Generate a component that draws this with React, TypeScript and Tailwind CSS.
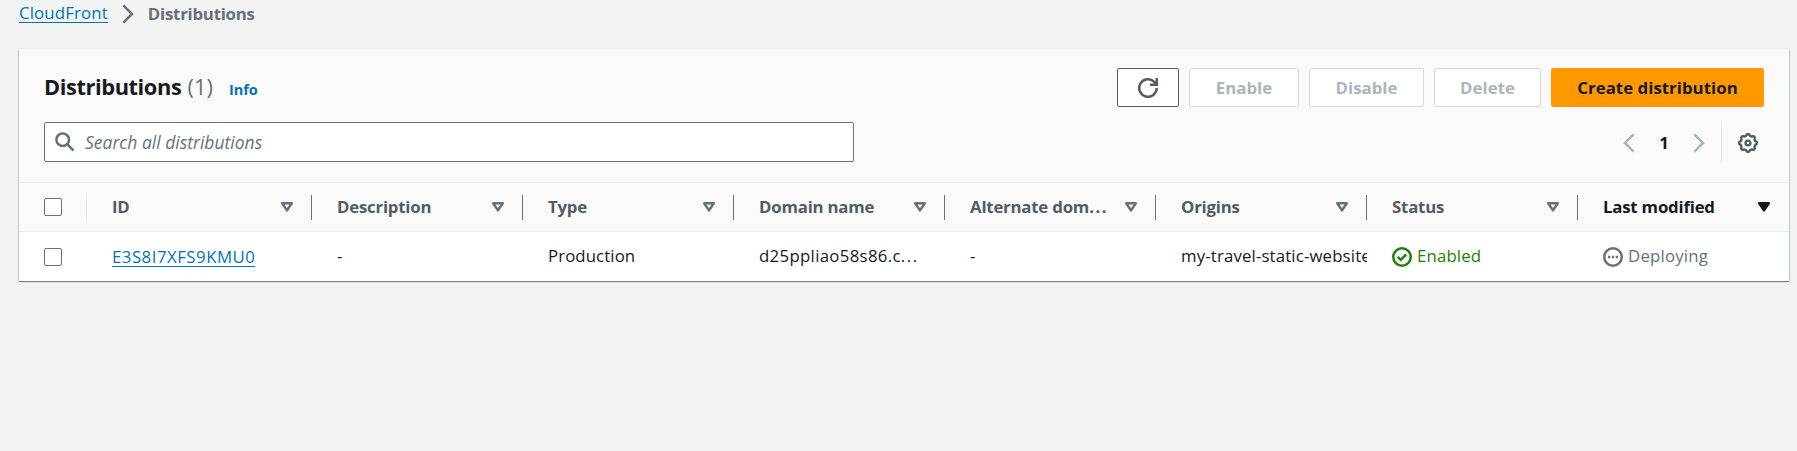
import React from "react";

type Column = { name: string; active?: boolean; dots?: boolean };

const columns: Column[] = [
  { name: "ID" },
  { name: "Description" },
  { name: "Type" },
  { name: "Domain name" },
  { name: "Alternate dom", dots: true },
  { name: "Origins" },
  { name: "Status" },
  { name: "Last modified", active: true },
];

function Chevron({ className, flip }: { className: string; flip?: boolean }) {
  return (
    <svg viewBox="0 0 20 20" className={`h-5 w-5 shrink-0 ${className}`} fill="none" stroke="currentColor" strokeWidth="2.5">
      <path d={flip ? "M14.600 1.400 6 10l8.600 8.600" : "M5.400 1.400 14 10l-8.600 8.600"} />
    </svg>
  );
}

function SortArrow({ active }: { active?: boolean }) {
  return (
    <svg viewBox="0 0 14 12" className={`h-3 w-3.5 shrink-0 ${active ? "" : "text-[#687078]"}`} stroke="currentColor" strokeWidth="2.5" strokeLinejoin="round" fill={active ? "currentColor" : "none"}>
      <path d="M2.200 2.200h9.600L7 9.400z" />
    </svg>
  );
}

function RefreshIcon() {
  return (
    <svg viewBox="0 0 20 20" className="h-5 w-5" fill="none" stroke="currentColor" strokeWidth="2.5">
      <path d="M18.750 10A8.750 8.750 0 1 1 16.200 3.800L18.500 6.300" />
      <path d="M18.750 0v6.700H12" />
    </svg>
  );
}

const gearOutline =
  Array.from({ length: 96 }, (_, i) => {
    const angle = (i / 96) * Math.PI * 2;
    const radius = 8.1 + 0.75 * Math.tanh(2.2 * Math.cos(8 * angle));
    return `${i ? "L" : "M"}${(10 + radius * Math.cos(angle)).toFixed(2)} ${(10 + radius * Math.sin(angle)).toFixed(2)}`;
  }).join("") + "z";

function GearIcon() {
  return (
    <svg viewBox="0 0 20 20" className="h-5 w-5" fill="none" stroke="currentColor" strokeWidth="2.4" strokeLinejoin="round">
      <path d={gearOutline} />
      <circle cx="10" cy="10" r="2.400" />
    </svg>
  );
}

function SearchIcon() {
  return (
    <svg viewBox="0 0 20 20" className="h-5 w-5 shrink-0" fill="none" stroke="currentColor" strokeWidth="2.5">
      <circle cx="7.700" cy="7.700" r="6.300" />
      <path d="m12.200 12.200 6.300 6.300" />
    </svg>
  );
}

function Checkbox() {
  return <span className="block h-[18px] w-[18px] rounded-[2px] border border-[#687078] bg-white" />;
}

function Dots() {
  return <span className="tracking-[1.5px]">...</span>;
}

function Button({ children, className }: { children: React.ReactNode; className: string }) {
  return (
    <button className={`flex h-[39px] items-center justify-center rounded-[2px] font-bold tracking-[0.05px] whitespace-nowrap ${className}`}>
      {children}
    </button>
  );
}

export default function App() {
  return (
    <div className="h-[451px] overflow-hidden bg-[#f2f3f3] font-['Open_Sans',sans-serif] text-[16.8px] leading-[27px] text-[#16191f] [font-stretch:90%]">
      <nav className="flex h-[49px] items-start pl-[19px]">
        <a className="mt-1 border-b border-[#0073bb] leading-[18px] tracking-[0.15px] whitespace-nowrap text-[#0073bb]">CloudFront</a>
        <Chevron className="mt-1 ml-[10px] text-[#687078]" />
        <span className="ml-[10px] font-bold tracking-[-0.22px] text-[#687078]">Distributions</span>
      </nav>
      <main className="ml-[19px] h-[232px] w-[1770px] bg-white shadow-[0_1px_1px_0_rgba(0,28,36,0.3),1px_1px_1px_0_rgba(0,28,36,0.15),-1px_1px_1px_0_rgba(0,28,36,0.15),0_-1px_0_0_#eaeded]">
        <header className="h-[134px] border-b border-[#eaeded] bg-[#fafafa] px-[25px] pt-[19px]">
          <div className="flex items-center justify-between">
            <div className="flex items-baseline">
              <h1 className="text-[21.8px] font-bold tracking-[-0.4px]">
                Distributions <span className="ml-px font-normal tracking-normal text-[#687078]">(1)</span>
              </h1>
              <a className="ml-4 text-[14.5px] font-bold text-[#0073bb]">Info</a>
            </div>
            <div className="flex gap-[10px]">
              <Button className="w-[62px] border border-[#545b64] bg-white text-[#545b64]"><RefreshIcon /></Button>
              <Button className="w-[110px] border border-[#d5dbdb] bg-white text-[#aab7b8]">Enable</Button>
              <Button className="w-[115px] border border-[#d5dbdb] bg-white text-[#aab7b8]">Disable</Button>
              <Button className="w-[107px] border border-[#d5dbdb] bg-white text-[#aab7b8]">Delete</Button>
              <Button className="w-[213px] bg-[#ff9900]">Create distribution</Button>
            </div>
          </div>
          <div className="mt-[15px] flex justify-between">
            <div className="flex h-10 w-[810px] items-center rounded-[2px] border border-[#687078] bg-white pl-[10px] text-[#687078]">
              <SearchIcon />
              <span className="ml-[10px] text-[17.5px] italic">Search all distributions</span>
            </div>
            <div className="mt-px flex h-[39px] items-center">
              <Chevron flip className="text-[#aab7b8]" />
              <span className="w-[50px] text-center font-bold">1</span>
              <Chevron className="text-[#aab7b8]" />
              <div className="ml-[12px] h-full w-px bg-[#eaeded]" />
              <span className="mr-[6px] ml-4 text-[#545b64]"><GearIcon /></span>
            </div>
          </div>
        </header>
        <div className="grid h-[49px] grid-cols-[68px_225px_repeat(7,211px)] items-center border-b border-[#eaeded] bg-[#fafafa]">
          <div className="flex h-[25px] items-center border-r border-[#eaeded] pl-[25px]"><Checkbox /></div>
          {columns.map((c) => (
            <div key={c.name} className={`flex h-[25px] items-center justify-between pl-[25px] font-bold tracking-[-0.2px] ${c.active ? "pr-[18px] text-[#16191f]" : "border-r border-[#687078] pr-[17px] text-[#545b64]"}`}>
              <span className="pb-0.5 whitespace-nowrap">{c.name}{c.dots && <Dots />}</span>
              <SortArrow active={c.active} />
            </div>
          ))}
        </div>
        <div className="grid h-[49px] grid-cols-[68px_225px_repeat(7,211px)] items-center whitespace-nowrap">
          <div className="pl-[25px]"><Checkbox /></div>
          <div className="pb-px pl-[25px]"><a className="inline-block border-b border-[#0073bb] leading-[19px] tracking-[0.5px] text-[#0073bb]">E3S8I7XFS9KMU0</a></div>
          <div className="pb-0.5 pl-[25px]">-</div>
          <div className="pb-0.5 pl-[25px] tracking-[0.1px]">Production</div>
          <div className="pb-0.5 pl-[25px] tracking-[0.32px]">d25ppliao58s86.c<Dots /></div>
          <div className="pb-0.5 pl-[25px]">-</div>
          <div className="overflow-hidden pb-0.5 pl-[25px] tracking-[0.15px]">my-travel-static-website</div>
          <div className="flex items-center gap-[5px] pl-[25px] text-[#1d8102]">
            <svg viewBox="0 0 20 20" className="h-5 w-5" fill="none" stroke="currentColor" strokeWidth="2.5">
              <circle cx="10" cy="10" r="8.750" /><path d="m5.700 9.800 3.100 3 5.300-5.300" />
            </svg>
            <span className="pb-0.5 tracking-[0.15px]">Enabled</span>
          </div>
          <div className="flex items-center gap-[5px] pl-[25px] text-[#687078]">
            <svg viewBox="0 0 20 20" className="h-5 w-5" fill="none" stroke="currentColor" strokeWidth="2.5">
              <circle cx="10" cy="10" r="8.750" /><path d="M5 10h2.300M8.850 10h2.300M12.700 10H15" />
            </svg>
            <span className="pb-0.5 tracking-[0.2px]">Deploying</span>
          </div>
        </div>
      </main>
    </div>
  );
}
